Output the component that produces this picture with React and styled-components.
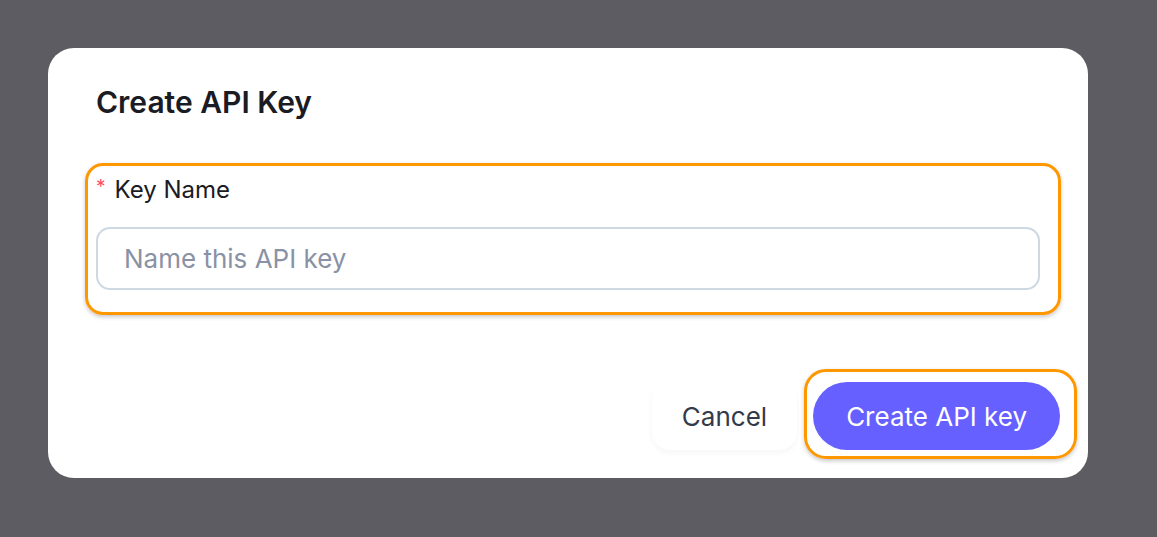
import React from "react";
import styled, { createGlobalStyle } from "styled-components";

const Global = createGlobalStyle`
  html, body { margin: 0; padding: 0; }
  body {
    background: #5c5c62;
    font-family: Inter, "Noto Sans", sans-serif;
    -webkit-font-smoothing: antialiased;
  }
`;

const Page = styled.div`
  width: 1157px;
  height: 537px;
  padding: 48px 69px 59px 48px;
  box-sizing: border-box;
  display: flex;
  align-items: flex-start;
`;

const Modal = styled.div`
  width: 1040px;
  height: 430px;
  box-sizing: border-box;
  background: #ffffff;
  border-radius: 26px;
  padding: 36px 48px 28px 48px;
  display: flex;
  flex-direction: column;
`;

const Title = styled.h2`
  margin: 0;
  font-size: 30px;
  line-height: 36px;
  font-weight: 600;
  color: #1b1b24;
`;

const Highlight = styled.div`
  position: relative;
  &::after {
    content: "";
    position: absolute;
    inset: ${(p) => p.$inset || "-12px"};
    border: 3.5px solid #ff9800;
    border-radius: ${(p) => p.$radius || "18px"};
    box-shadow: 0 2px 4px rgba(0, 0, 0, 0.22);
    pointer-events: none;
  }
`;

const Field = styled(Highlight)`
  margin-top: 55px;
  display: flex;
  flex-direction: column;
  gap: 22px;
`;

const Label = styled.label`
  display: flex;
  align-items: center;
  gap: 9px;
  font-size: 24px;
  line-height: 30px;
  color: #1b1b24;
`;

const Req = styled.span`
  color: #ff4d5e;
  font-size: 19px;
  position: relative;
  top: -3px;
`;

const Input = styled.input`
  height: 63px;
  box-sizing: border-box;
  border: 2px solid #cdd8e3;
  border-radius: 14px;
  padding: 0 26px;
  font-family: inherit;
  font-size: 26px;
  color: #1b1b24;
  outline: none;
  &::placeholder {
    color: #8992a4;
  }
`;

const Footer = styled.div`
  margin-top: auto;
  margin-right: -20px;
  display: flex;
  justify-content: flex-end;
  align-items: center;
  gap: 16px;
`;

const Button = styled.button`
  height: 68px;
  border: none;
  border-radius: ${(p) => (p.$primary ? "34px" : "18px")};
  padding: 0 ${(p) => (p.$primary ? "33px" : "30px")};
  font-family: inherit;
  font-size: 26px;
  font-weight: 400;
  cursor: pointer;
  background: ${(p) => (p.$primary ? "#6560ff" : "#ffffff")};
  color: ${(p) => (p.$primary ? "#ffffff" : "#343a4a")};
  box-shadow: ${(p) =>
    p.$primary ? "none" : "0 3px 6px rgba(0, 0, 0, 0.04)"};
`;

const PrimaryWrap = styled(Highlight)`
  display: flex;
`;

export default function App() {
  return (
    <>
      <Global />
      <Page>
        <Modal>
          <Title>Create API Key</Title>
          <Field $inset="-12px -21px -25px -11px" $radius="18px">
            <Label>
              <Req>*</Req>
              Key Name
            </Label>
            <Input placeholder="Name this API key" />
          </Field>
          <Footer>
            <Button>Cancel</Button>
            <PrimaryWrap $inset="-13px -17px -9px -9px" $radius="22px">
              <Button $primary>Create API key</Button>
            </PrimaryWrap>
          </Footer>
        </Modal>
      </Page>
    </>
  );
}
